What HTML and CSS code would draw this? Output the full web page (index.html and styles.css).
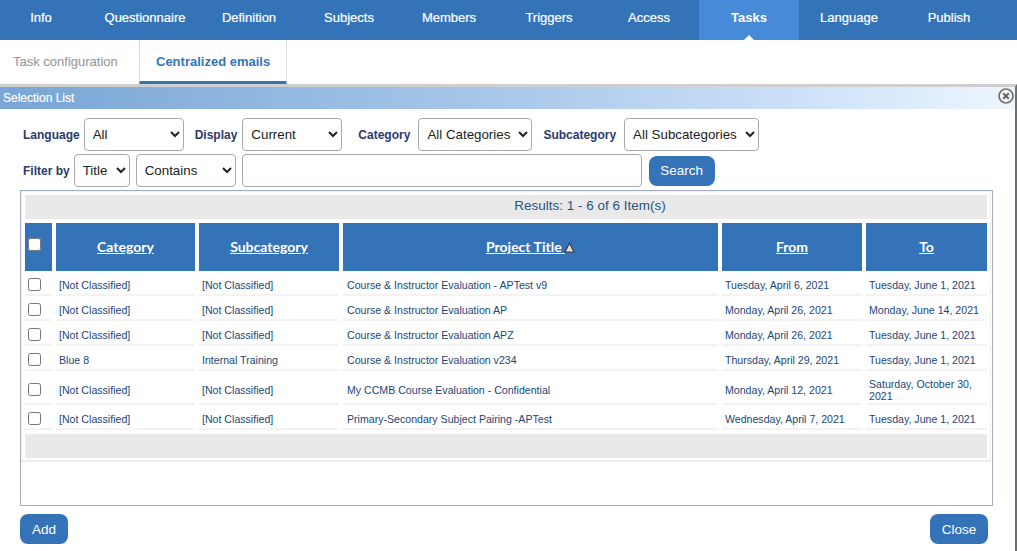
FILE: index.html
```html
<!DOCTYPE html>
<html lang="en">
<head>
<meta charset="utf-8">
<title>Selection List</title>
<link rel="stylesheet" href="styles.css">
</head>
<body>
<nav class="nav">
  <a class="nav-item nav-first">Info</a>
  <a class="nav-item nav-wide">Questionnaire</a>
  <a class="nav-item">Definition</a>
  <a class="nav-item">Subjects</a>
  <a class="nav-item">Members</a>
  <a class="nav-item">Triggers</a>
  <a class="nav-item">Access</a>
  <a class="nav-item nav-active">Tasks</a>
  <a class="nav-item">Language</a>
  <a class="nav-item">Publish</a>
</nav>
<div class="tabs">
  <a class="tab">Task configuration</a>
  <a class="tab tab-active">Centralized emails</a>
</div>
<section class="dialog">
  <header class="dialog-title">
    <span>Selection List</span>
    <svg class="dialog-close" width="16" height="16" viewBox="0 0 16 16" aria-hidden="true">
      <circle cx="8" cy="8" r="7" fill="#f4f6f8" stroke="#737373" stroke-width="1.7"/>
      <path d="M5.2 5.2l5.6 5.6M10.8 5.2l-5.6 5.6" stroke="#6a6a6a" stroke-width="2.2" fill="none"/>
    </svg>
  </header>
  <form class="filters">
    <div class="filter-row">
      <label class="lbl">Language</label>
      <select class="sel w100"><option>All</option></select>
      <label class="lbl lbl-display">Display</label>
      <select class="sel w100"><option>Current</option></select>
      <label class="lbl lbl-category">Category</label>
      <select class="sel w114"><option>All Categories</option></select>
      <label class="lbl lbl-sub">Subcategory</label>
      <select class="sel w135"><option>All Subcategories</option></select>
    </div>
    <div class="filter-row">
      <label class="lbl">Filter by</label>
      <select class="sel w56"><option>Title</option></select>
      <select class="sel w100"><option>Contains</option></select>
      <input class="text-input" type="text">
      <button class="btn btn-search" type="button">Search</button>
    </div>
  </form>
  <div class="results">
    <div class="grid-wrap">
    <table class="grid">
      <colgroup>
        <col class="c0"><col class="c1"><col class="c2"><col class="c3"><col class="c4"><col class="c5">
      </colgroup>
      <thead>
        <tr><td class="bar bar-top" colspan="6">Results: 1 - 6 of 6 Item(s)</td></tr>
        <tr class="head">
          <th class="th-check"><input class="check" type="checkbox"></th>
          <th><a>Category</a></th>
          <th><a>Subcategory</a></th>
          <th><a>Project Title&nbsp;</a><svg class="sort" width="11" height="11" viewBox="0 0 11 11" aria-hidden="true"><path d="M5.5 1L10 10H1z" fill="#dcdcdc" stroke="#3f3f3f" stroke-width="1.2"/></svg></th>
          <th><a>From</a></th>
          <th><a>To</a></th>
        </tr>
      </thead>
      <tbody>
        <tr><td><input class="check" type="checkbox"></td><td>[Not Classified]</td><td>[Not Classified]</td><td>Course &amp; Instructor Evaluation - APTest v9</td><td>Tuesday, April 6, 2021</td><td>Tuesday, June 1, 2021</td></tr>
        <tr><td><input class="check" type="checkbox"></td><td>[Not Classified]</td><td>[Not Classified]</td><td>Course &amp; Instructor Evaluation AP</td><td>Monday, April 26, 2021</td><td>Monday, June 14, 2021</td></tr>
        <tr><td><input class="check" type="checkbox"></td><td>[Not Classified]</td><td>[Not Classified]</td><td>Course &amp; Instructor Evaluation APZ</td><td>Monday, April 26, 2021</td><td>Tuesday, June 1, 2021</td></tr>
        <tr><td><input class="check" type="checkbox"></td><td>Blue 8</td><td>Internal Training</td><td>Course &amp; Instructor Evaluation v234</td><td>Thursday, April 29, 2021</td><td>Tuesday, June 1, 2021</td></tr>
        <tr class="tall"><td><input class="check" type="checkbox"></td><td>[Not Classified]</td><td>[Not Classified]</td><td>My CCMB Course Evaluation - Confidential</td><td>Monday, April 12, 2021</td><td>Saturday, October 30, 2021</td></tr>
        <tr><td><input class="check" type="checkbox"></td><td>[Not Classified]</td><td>[Not Classified]</td><td>Primary-Secondary Subject Pairing -APTest</td><td>Wednesday, April 7, 2021</td><td>Tuesday, June 1, 2021</td></tr>
      </tbody>
      <tfoot>
        <tr><td class="bar" colspan="6"></td></tr>
      </tfoot>
    </table>
    </div>
  </div>
  <footer class="actions">
    <button class="btn btn-add" type="button">Add</button>
    <button class="btn btn-close" type="button">Close</button>
  </footer>
</section>
</body>
</html>
```
FILE: styles.css
```css
* { box-sizing: border-box; }
html, body { margin: 0; padding: 0; }
body {
  width: 1017px;
  height: 551px;
  overflow: hidden;
  background: #fff;
  font-family: "Liberation Sans", Arial, sans-serif;
}

/* top navigation */
.nav {
  display: flex;
  height: 40px;
  background: #3573b9;
}
.nav-item {
  position: relative;
  width: 100px;
  line-height: 35px;
  text-align: center;
  color: #fff;
  font-size: 13px;
  -webkit-text-stroke: 0.2px #fff;
}
.nav-first { width: 91px; padding-right: 9px; }
.nav-wide { width: 108px; }
.nav-active { background: #468ad8; font-weight: bold; -webkit-text-stroke: 0; }
.nav-active::after {
  content: "";
  position: absolute;
  left: 45px;
  bottom: 0;
  border: 5px solid transparent;
  border-top: 0;
  border-bottom-color: #fff;
}

/* tabs */
.tabs {
  display: flex;
  height: 44px;
}
.tab {
  font-size: 13px;
  -webkit-text-stroke: 0.15px currentColor;
  line-height: 44px;
  padding-left: 13px;
  width: 139px;
  color: #9b9b9b;
}
.tab-active {
  width: 148px;
  padding-left: 16px;
  font-weight: bold;
  -webkit-text-stroke: 0;
  color: #3573b9;
  border-left: 1px solid #d6dfe9;
  border-right: 1px solid #d6dfe9;
  border-bottom: 3px solid #3573b9;
  line-height: 43px;
}

/* dialog */
.dialog {
  position: relative;
  height: 467px;
  border-top: 3px solid #cfcfcf;
  border-right: 2px solid #6e6e6e;
}
.dialog-title {
  height: 22px;
  padding-left: 3px;
  font-size: 12px;
  line-height: 22px;
  color: #fff;
  -webkit-text-stroke: 0.15px #fff;
  background: linear-gradient(90deg, #78a5d5 0%, #a9c8ea 50%, #d1e4fa 82%, #eef6fd 100%);
}
.dialog-close {
  position: absolute;
  right: 1px;
  top: 1px;
}

/* filters */
.filters {
  padding: 9px 0 0 23px;
  height: 81px;
}
.filter-row {
  display: flex;
  align-items: center;
  height: 33px;
  margin-bottom: 3px;
}
.lbl {
  font-size: 12px;
  font-weight: bold;
  color: #2c3a6b;
  margin-right: 4px;
  white-space: nowrap;
}
.lbl-display { margin-left: 11px; margin-right: 5px; }
.lbl-category { margin-left: 16px; margin-right: 8px; }
.lbl-sub { margin-left: 11px; margin-right: 8px; }
.sel {
  height: 33px;
  padding: 0 4px;
  font: 13.33px "Liberation Sans", Arial, sans-serif;
  color: #222;
  background: #fff;
  border: 1px solid #aaa;
  border-radius: 4px;
  flex: none;
}
.w100 { width: 100px; }
.w114 { width: 114px; }
.w135 { width: 135px; }
.w56 { width: 56px; margin-right: 6px; }
.w56 + .w100 { margin-right: 6px; }
.text-input {
  width: 400px;
  height: 33px;
  border: 1px solid #aaa;
  border-radius: 4px;
  background: #fff;
  margin-right: 7px;
}
.btn {
  height: 30px;
  border: 0;
  border-radius: 8px;
  background: #3573b9;
  color: #fff;
  font: 13.5px "Liberation Sans", Arial, sans-serif;
  padding: 0;
}
.btn-search { width: 66px; }

/* results */
.results {
  height: 316px;
  margin: 0 22px 0 20px;
  border: 1px solid #a3adbf;
}
.grid-wrap {
  width: 970px;
  height: 271px;
  border: 1px solid #f1f1f1;
  border-bottom: 2px solid #eeeeee;
}
.grid {
  width: 970px;
  margin: -1px 0 0 -1px;
  table-layout: fixed;
  border-collapse: separate;
  border-spacing: 4px;
  font-size: 10.6px;
}
.c0 { width: 27px; }
.c1 { width: 139px; }
.c2 { width: 140px; }
.c3 { width: 375px; }
.c4 { width: 140px; }
.c5 { width: 121px; }
.bar {
  height: 24px;
  padding: 0;
  background: #e9e9e9;
  text-align: center;
  font-size: 13.5px;
  color: #2a5484;
}
.bar-top { padding: 0 0 3px 168px; }
.head th {
  height: 48px;
  padding: 0 0 1px;
  background: #3573b9;
  color: #fff;
  font: bold 14px Lato, "Liberation Sans", sans-serif;
  text-align: center;
  vertical-align: middle;
}
.head a { text-decoration: underline; }
.th-check .check { margin: 0 0 4px 3px; }
.sort { vertical-align: -1px; margin-left: -1px; }
.grid tbody tr { height: 21px; }
.grid tbody tr.tall { height: 30px; }
.grid tbody td {
  padding: 0 3px;
  height: 21px;
  color: #1c4676;
  line-height: 12px;
  border-bottom: 2px solid #f3f3f3;
  vertical-align: middle;
}
.grid tbody tr.tall td { height: 30px; padding-top: 2px; }
.grid tbody td:first-child { padding: 0 0 1px 3px; }
.grid tbody td:nth-child(4) { padding-left: 4px; }
.check {
  display: block;
  width: 13px;
  height: 13px;
  margin: 0;
}

/* footer actions */
.actions {
  display: flex;
  justify-content: space-between;
  padding: 8px 27px 0 20px;
}
.btn-add { width: 48px; }
.btn-close { width: 58px; }
```
